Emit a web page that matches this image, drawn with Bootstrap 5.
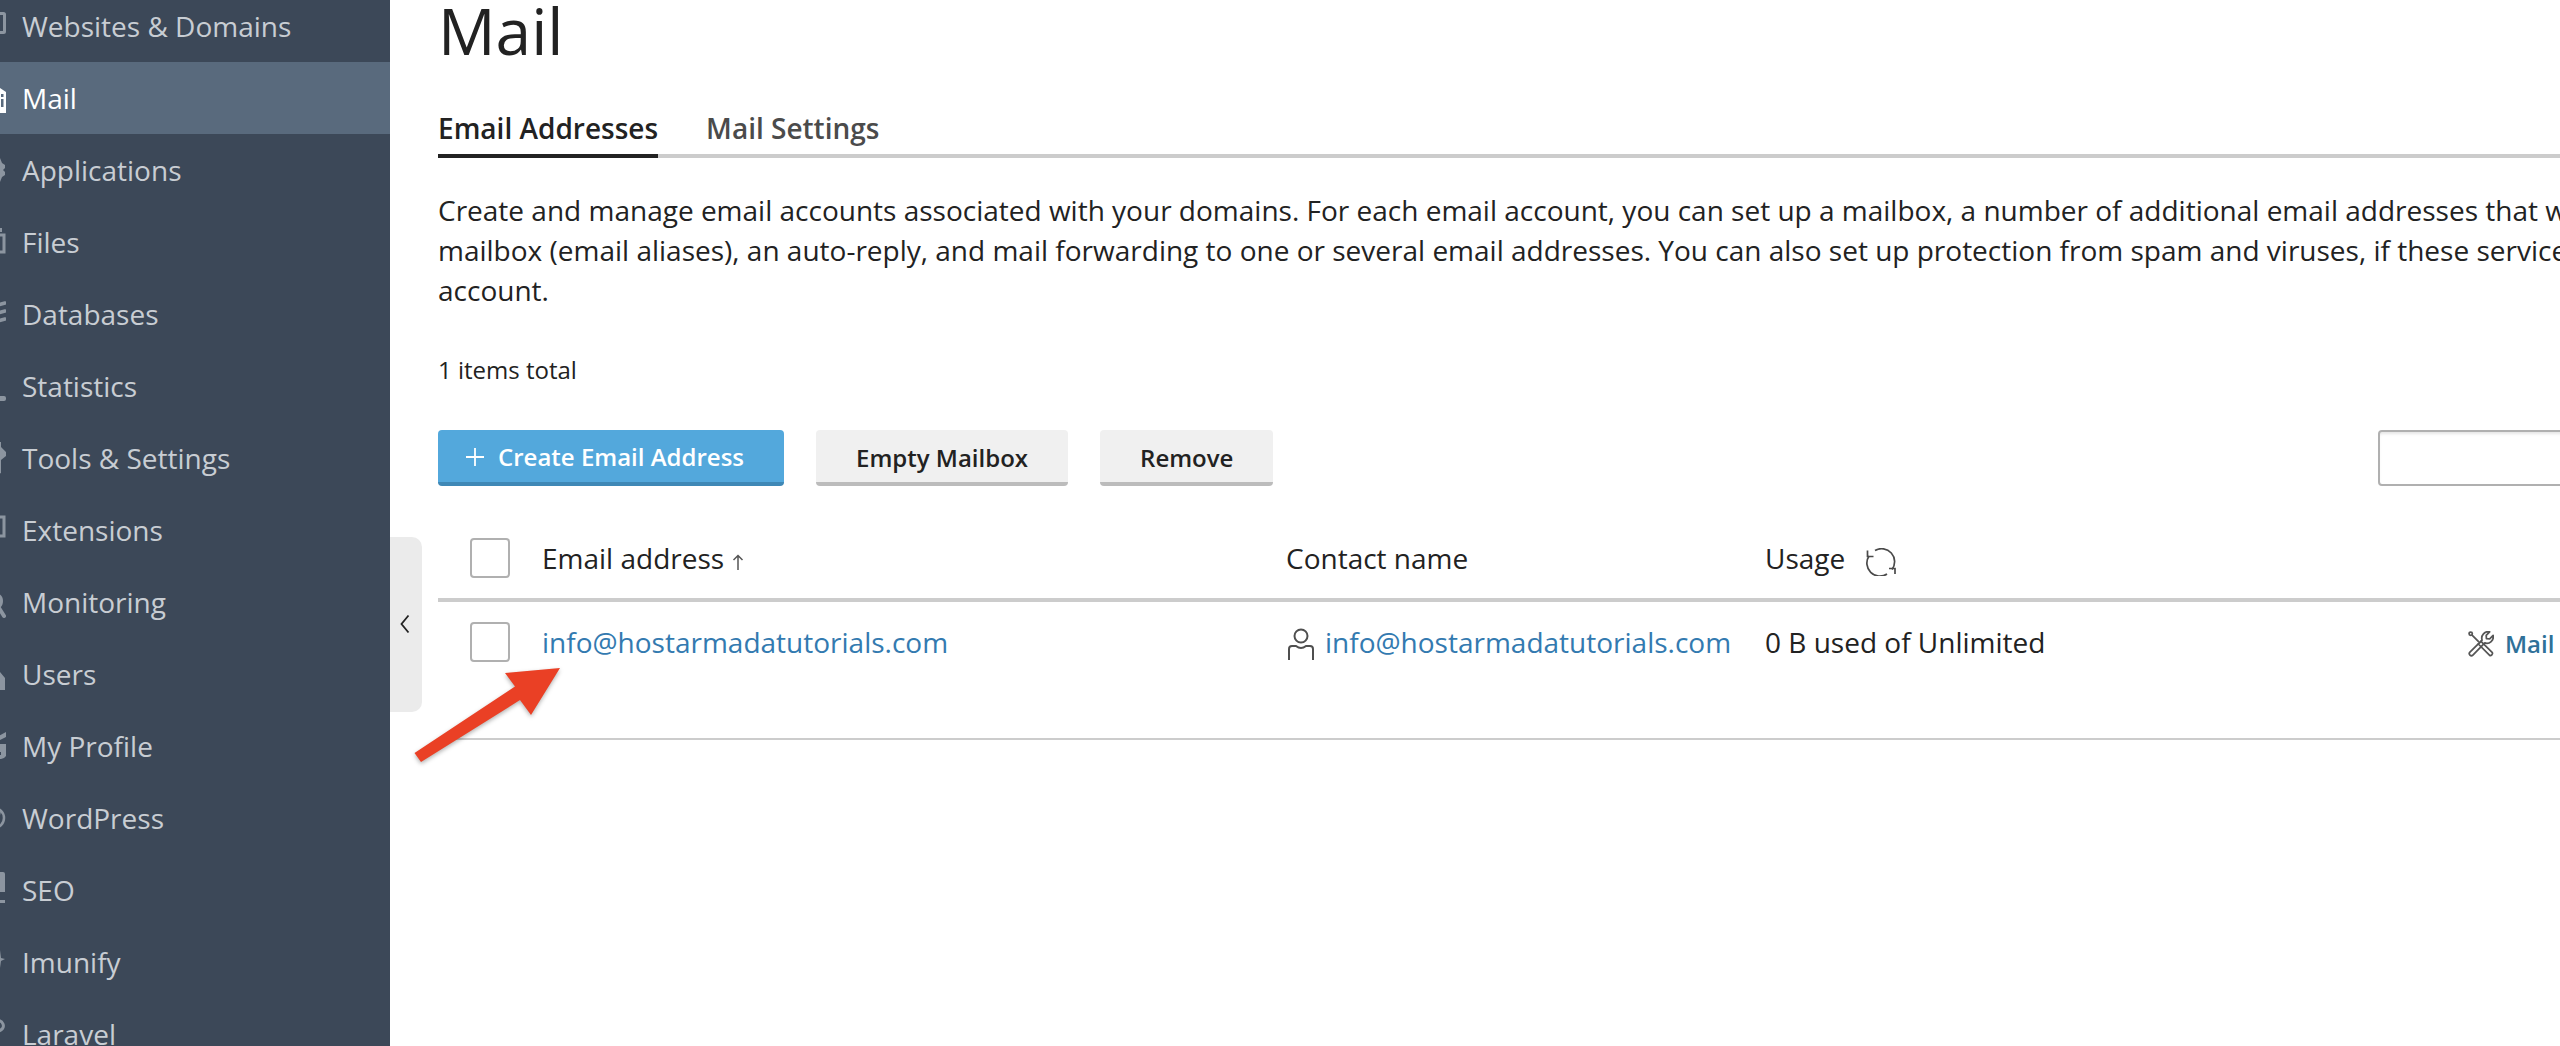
<!DOCTYPE html>
<html lang="en">
<head>
<meta charset="utf-8">
<title>Mail</title>
<link href="https://cdn.jsdelivr.net/npm/bootstrap@5.3.0/dist/css/bootstrap.min.css" rel="stylesheet">
<style>
html,body{height:100%;overflow:hidden;background:#fff}
body{font-family:"Open Sans","Noto Sans",sans-serif;font-size:28px;line-height:40px;color:#222}
.shell{height:1046px;overflow:hidden}
.side-panel{width:390px;flex:0 0 390px;background:#3c4858;height:1046px;overflow:hidden;padding-top:0}
.side-list{margin-top:-10px}
.side-item{height:72px;color:#c8cdd3;font-size:28px;text-decoration:none}
.side-item.is-on{background:#596a7d;color:#fff}
.side-item svg{width:28px;height:36px;margin-left:-22px;margin-right:16px;flex:none;color:#8c95a0}
.side-item.is-on svg{color:#fff}
.work{position:relative;flex:1 1 auto;min-width:0;overflow:hidden;padding-left:48px}
.work-inner{width:2340px}
.page-title{font-size:64px;font-weight:400;line-height:64px;margin:-1px 0 0;color:#222}
.tab-bar{border-bottom:4px solid #ccc;margin-top:31px;gap:48px;height:64px}
.tab-bar .nav-link{padding:14px 0 0;height:64px;margin-bottom:-4px;color:#4b4b4b;font-weight:600;font-size:28px;border-bottom:4px solid transparent;line-height:40px}
.tab-bar .nav-link.active{color:#222;border-bottom-color:#222}
.intro-text{margin:32px 0 0;font-size:28px;line-height:40px;white-space:nowrap}
.total-text{font-size:24px;line-height:32px;margin:44px 0 0}
.tool-row{margin-top:44px;height:56px}
.tool-btn{height:56px;border:0;border-bottom:4px solid #bcbcbc;border-radius:4px;background:#f0f0f0;color:#222;font-size:24px;font-weight:600;line-height:52px;padding:2px 40px 0;--bs-btn-padding-y:0}
.tool-btn.is-main{background:#53a8dc;border-bottom-color:#3f88b6;color:#fff;padding:2px 40px 0 28px;display:inline-flex;align-items:center;gap:14px}
.tool-btn:hover{background:#f0f0f0;color:#222;border-bottom-color:#bcbcbc}
.tool-btn.is-main:hover{background:#53a8dc;color:#fff;border-bottom-color:#3f88b6}
.tool-btn+.tool-btn{margin-left:32px}
.find-box{margin-left:auto;width:400px;height:56px;border:2px solid #b0b0b0;border-radius:4px;box-shadow:inset 0 3px 3px -1px #e6e6e6;background:#fff}
.mail-table{table-layout:fixed;width:2300px;margin:34px 0 0;--bs-table-border-color:transparent;color:#222}
.mail-table th,.mail-table td{padding:0;vertical-align:top;font-weight:400;font-size:28px;line-height:40px;border:0;background:transparent;box-shadow:none}
.mail-table thead tr{height:80px;border-bottom:4px solid #ccc}
.mail-table tbody tr{height:139px;border-bottom:2px solid #ccc}
.mail-table th{padding-top:18px}
.mail-table td{padding-top:20px}
.mail-table th.box-cell,.mail-table td.box-cell{padding-left:32px}
.mail-table th.box-cell{padding-top:18px}
.tick-box{display:block;width:40px;height:40px;border:2px solid #b0b0b0;border-radius:4px;background:#fff}
.addr-link{color:#337ab0;text-decoration:none}
.act-link{color:#2f7199;font-size:24px;font-weight:600;text-decoration:none}
.user-glyph{width:26px;height:32px;margin:-4px 11px 0 2px;vertical-align:middle}
.sort-glyph{width:14px;height:16px;margin-left:7px;vertical-align:-1px}
.sync-glyph{width:32px;height:28px;margin-left:20px;vertical-align:-7px}
.tool-glyph{width:26px;height:26px;margin-right:11px;vertical-align:-4px}
.plus-glyph{width:18px;height:18px;flex:none}
.fold-tab{position:absolute;left:0;top:537px;width:32px;height:175px;background:#ebebeb;border-radius:0 10px 10px 0}
.fold-tab svg{position:absolute;left:10px;top:77px;width:10px;height:20px}
.red-arrow{position:absolute;left:0;top:640px;width:200px;height:140px;filter:drop-shadow(0 2px 2px rgba(0,0,0,.3));pointer-events:none}
</style>
</head>
<body>
<div class="shell d-flex">
  <aside class="side-panel">
    <nav class="side-list d-flex flex-column">
      <a class="side-item d-flex align-items-center" href="#"><svg viewBox="0 0 28 36"><rect x="10" y="5.500" width="16.500" height="19" rx="1" fill="none" stroke="currentColor" stroke-width="3"/></svg>Websites &amp; Domains</a>
      <a class="side-item is-on d-flex align-items-center" href="#"><svg viewBox="0 0 28 36"><path d="M10 14l12-6 6 4v21H10z" fill="currentColor"/><path d="M23 14h2.500v3H23zM23 19h2.500v8H23z" fill="#596a7d"/></svg>Mail</a>
      <a class="side-item d-flex align-items-center" href="#"><svg viewBox="0 0 28 36"><path d="M16 6h6l2 5 3 2v3l-2 2 2 2v3l-3 2-2 5h-6z" fill="currentColor"/></svg>Applications</a>
      <a class="side-item d-flex align-items-center" href="#"><svg viewBox="0 0 28 36"><path d="M20 4h4v4h-4z" fill="currentColor"/><rect x="12" y="11" width="14" height="17" fill="none" stroke="currentColor" stroke-width="3"/></svg>Files</a>
      <a class="side-item d-flex align-items-center" href="#"><svg viewBox="0 0 28 36" fill="none" stroke="currentColor" stroke-width="3.500" stroke-linecap="round"><path d="M16 10l11-3M16 18l11-3M16 26l11-3"/></svg>Databases</a>
      <a class="side-item d-flex align-items-center" href="#"><svg viewBox="0 0 28 36"><rect x="10" y="28" width="18" height="5" rx="2" fill="currentColor"/></svg>Statistics</a>
      <a class="side-item d-flex align-items-center" href="#"><svg viewBox="0 0 28 36"><path d="M20 2h3v5l5 5v4l-5 4v13q-3 2-5 0V2z" fill="currentColor"/></svg>Tools &amp; Settings</a>
      <a class="side-item d-flex align-items-center" href="#"><svg viewBox="0 0 28 36" fill="none" stroke="currentColor" stroke-width="3"><path d="M14 5h12v19H14"/></svg>Extensions</a>
      <a class="side-item d-flex align-items-center" href="#"><svg viewBox="0 0 28 36" fill="none" stroke="currentColor" stroke-width="4" stroke-linecap="round"><path d="M14 11h4q5 1 5 6t-5 7"/><path d="M21 24l5 8"/></svg>Monitoring</a>
      <a class="side-item d-flex align-items-center" href="#"><svg viewBox="0 0 28 36"><path d="M18 9h2v7h2l5 6v12H18z" fill="currentColor"/></svg>Users</a>
      <a class="side-item d-flex align-items-center" href="#"><svg viewBox="0 0 28 36" fill="currentColor"><path d="M17 10l11-6v5l-6 3v6h-5zM22 16h6v12q-2 3-5 3h-6v-4h6v-3h-6v-4h5z"/></svg>My Profile</a>
      <a class="side-item d-flex align-items-center" href="#"><svg viewBox="0 0 28 36" fill="none" stroke="currentColor" stroke-width="2.500"><circle cx="16" cy="18" r="10"/><path d="M22 11l-3 13" stroke-width="2"/></svg>WordPress</a>
      <a class="side-item d-flex align-items-center" href="#"><svg viewBox="0 0 28 36" fill="currentColor"><path d="M22 0h3q2 0 2 2v18h-5z"/><rect x="18" y="28" width="9" height="3"/></svg>SEO</a>
      <a class="side-item d-flex align-items-center" href="#"><svg viewBox="0 0 28 36" fill="currentColor"><path d="M22 6l1 8 4 1-4 2-1 7-2-7-3-1 3-2z"/></svg>Imunify</a>
      <a class="side-item d-flex align-items-center" href="#"><svg viewBox="0 0 28 36" fill="none" stroke="currentColor" stroke-width="3"><path d="M16 5q7-2 9 3t-6 8"/></svg>Laravel</a>
    </nav>
  </aside>
  <main class="work">
    <div class="work-inner">
      <h1 class="page-title">Mail</h1>
      <ul class="nav tab-bar">
        <li class="nav-item"><a class="nav-link active" href="#">Email Addresses</a></li>
        <li class="nav-item"><a class="nav-link" href="#">Mail Settings</a></li>
      </ul>
      <p class="intro-text">Create and manage email accounts associated with your domains. For each email account, you can set up a mailbox, a number of additional email addresses that will<br>mailbox (email aliases), an auto-reply, and mail forwarding to one or several email addresses. You can also set up protection from spam and viruses, if these services<br>account.</p>
      <p class="total-text">1 items total</p>
      <div class="tool-row d-flex align-items-start">
        <button type="button" class="btn tool-btn is-main"><svg class="plus-glyph" viewBox="0 0 18 18"><path d="M9 0v18M0 9h18" stroke="#fff" stroke-width="1.800"/></svg>Create Email Address</button>
        <button type="button" class="btn tool-btn">Empty Mailbox</button>
        <button type="button" class="btn tool-btn">Remove</button>
        <div class="find-box"></div>
      </div>
      <table class="table mail-table">
        <colgroup><col style="width:104px"><col style="width:744px"><col style="width:479px"><col style="width:703px"><col style="width:270px"></colgroup>
        <thead>
          <tr>
            <th class="box-cell"><span class="tick-box"></span></th>
            <th>Email address<svg class="sort-glyph" viewBox="0 0 14 16" fill="none" stroke="#555" stroke-width="1.500"><path d="M7 16V2M2.500 6L7 1.500 11.500 6"/></svg></th>
            <th>Contact name</th>
            <th>Usage<svg class="sync-glyph" viewBox="0 0 32 28" fill="none" stroke="#4a4a4a" stroke-width="1.700"><path d="M10 2.500A13 13 0 0 1 27 21.500"/><path d="M30 26v-5.500h-6"/><path d="M22 26A13 13 0 0 1 4 8"/><path d="M2.500 2.500V8.500H8.500"/></svg></th>
            <th></th>
          </tr>
        </thead>
        <tbody>
          <tr>
            <td class="box-cell"><span class="tick-box"></span></td>
            <td><a class="addr-link" href="#">info@hostarmadatutorials.com</a></td>
            <td><svg class="user-glyph" viewBox="0 0 26 32" fill="none" stroke="#4f4f4f" stroke-width="2"><circle cx="13" cy="8" r="6.500"/><path d="M1 32V21q0-3 3-3h4q5 4 10 0h4q3 0 3 3v11"/></svg><a class="addr-link" href="#">info@hostarmadatutorials.com</a></td>
            <td>0 B used of Unlimited</td>
            <td><svg class="tool-glyph" viewBox="0 0 24 24" fill="none" stroke="#555" stroke-width="1.600" stroke-linejoin="round"><circle cx="2.500" cy="2.500" r="1.500"/><path d="M3.500 3.500L10 10"/><path d="M12 9.500L22.500 20Q23 21 22 22T20 22.500L9.500 12z"/><path d="M1.800 19.500L13 8.500A6 6 0 0 1 20 .8L16.800 4 17 7 20 7.200 23.200 4A6 6 0 0 1 15.500 11L4.500 22.200A1.900 1.900 0 0 1 1.800 19.500Z"/></svg><a class="act-link" href="#">Mail</a></td>
          </tr>
        </tbody>
      </table>
    </div>
    <div class="fold-tab"><svg viewBox="0 0 10 20" fill="none" stroke="#222" stroke-width="1.800"><path d="M8.500 1.500L1.500 10l7 8.500"/></svg></div>
    <svg class="red-arrow" viewBox="0 0 200 140"><path d="M24.500 113L125 46.500 115 33 170 28l-29 47-11-15L31 122z" fill="#ea4025"/></svg>
  </main>
</div>
<script src="https://cdn.jsdelivr.net/npm/bootstrap@5.3.0/dist/js/bootstrap.bundle.min.js"></script>
</body>
</html>
